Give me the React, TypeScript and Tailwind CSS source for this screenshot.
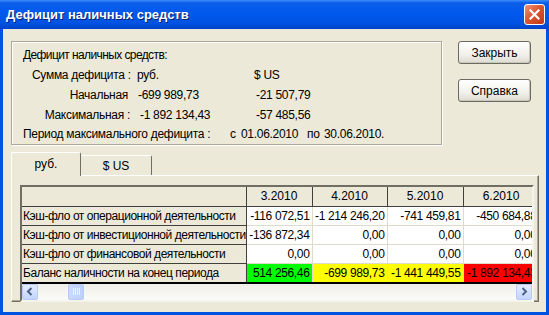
const rows = [
  { label: "Кэш-фло от операционной деятельности", vals: ["-116 072,51", "-1 214 246,20", "-741 459,81", "-450 684,88"] },
  { label: "Кэш-фло от инвестиционной деятельности", vals: ["-136 872,34", "0,00", "0,00", "0,00"] },
  { label: "Кэш-фло от финансовой деятельности", vals: ["0,00", "0,00", "0,00", "0,00"] },
];

const balance = [
  { v: "514 256,46", c: "bg-[#00ff00]" },
  { v: "-699 989,73", c: "bg-[#ffff00]" },
  { v: "-1 441 449,55", c: "bg-[#ffff00]" },
  { v: "-1 892 134,43", c: "bg-[#ff0000]" },
];

const months = ["3.2010", "4.2010", "5.2010", "6.2010"];
const colW = ["w-[66px]", "w-[75px]", "w-[76px]", "w-[76px]"];

function XpButton({ children }: { children: string }) {
  return (
    <button className="w-[73px] h-[23px] rounded-[3px] border border-[#6b6a62] bg-[linear-gradient(to_bottom,#ffffff,#f1f0ea_60%,#dcdad0)] shadow-[inset_-1px_-1px_0_#c9c7ba] text-[12px] text-black">
      {children}
    </button>
  );
}

function ScrollArrow({ dir }: { dir: "left" | "right" }) {
  return (
    <div className="w-[16px] h-[16px] rounded-[2px] border border-[#b7cbf5] bg-[linear-gradient(to_bottom,#e3ecff,#c3d5fd)] flex items-center justify-center">
      <svg width="8" height="9" viewBox="0 0 8 9">
        {dir === "left" ? (
          <path d="M5.5 1 L2 4.5 L5.5 8" stroke="#4d6185" strokeWidth="2" fill="none" />
        ) : (
          <path d="M2.5 1 L6 4.5 L2.5 8" stroke="#4d6185" strokeWidth="2" fill="none" />
        )}
      </svg>
    </div>
  );
}

export default function App() {
  return (
    <div className="w-[549px] h-[315px] flex flex-col font-['Liberation_Sans',Arial,sans-serif] text-[12px] text-black overflow-hidden">
      {/* Title bar */}
      <div className="h-[29px] shrink-0 flex items-center justify-between pl-[6px] pr-[4px] bg-[linear-gradient(to_bottom,#3d8ef9_0%,#0a5de9_10%,#0058ee_45%,#0053e2_80%,#0042c8_100%)]">
        <span className="text-white font-bold text-[13px] [text-shadow:1px_1px_0_#0a1f6e]">Дефицит наличных средств</span>
        <div className="w-[21px] h-[21px] rounded-[3px] border border-white bg-[linear-gradient(to_bottom_right,#f09478,#d9532e_50%,#c0391a)] flex items-center justify-center">
          <svg width="11" height="11" viewBox="0 0 11 11">
            <path d="M1.5 1.5 L9.5 9.5 M9.5 1.5 L1.5 9.5" stroke="white" strokeWidth="2.2" strokeLinecap="square" />
          </svg>
        </div>
      </div>

      {/* Body */}
      <div className="flex-1 bg-[#ece9d8] border-x-[3px] border-b-[3px] border-[#0052e0] flex flex-col pl-[8px] pr-[7px] pt-[12px]">
        <div className="flex">
          {/* Group box */}
          <div className="w-[431px] h-[104px] border border-[#aca899] shadow-[inset_1px_1px_0_#fff,1px_1px_0_#fff] pl-[11px] pt-[4px] tracking-[-0.3px]">
            <div className="h-[19px] leading-[19px] tracking-[-0.6px]">Дефицит наличных средств:</div>
            <div className="flex h-[19px] leading-[19px] mt-[1px] whitespace-nowrap">
              <span className="ml-[9px] w-[98px] text-right">Сумма дефицита :</span>
              <span className="ml-[7px] w-[117px]">руб.</span>
              <span>$ US</span>
            </div>
            <div className="flex h-[19px] leading-[19px] mt-[1px] whitespace-nowrap">
              <span className="ml-[9px] w-[96px] text-right">Начальная</span>
              <span className="ml-[10px] w-[118px]">-699 989,73</span>
              <span>-21 507,79</span>
            </div>
            <div className="flex h-[19px] leading-[19px] mt-[1px] whitespace-nowrap">
              <span className="ml-[9px] w-[98px] text-right">Максимальная :</span>
              <span className="ml-[10px] w-[116px]">-1 892 134,43</span>
              <span>-57 485,56</span>
            </div>
            <div className="flex h-[19px] leading-[19px] whitespace-nowrap">
              <span className="w-[207px]">Период максимального дефицита :</span>
              <span className="w-[11px]">с</span>
              <span className="w-[66px]">01.06.2010</span>
              <span className="w-[17px]">по</span>
              <span>30.06.2010.</span>
            </div>
          </div>

          <div className="ml-[16px] flex flex-col gap-[15px]">
            <XpButton>Закрыть</XpButton>
            <XpButton>Справка</XpButton>
          </div>
        </div>

        {/* Tabs */}
        <div className="mt-[7px] flex items-end h-[23px]">
          <div className="relative z-10 -mb-px h-[24px] w-[70px] bg-[#ece9d8] border-l border-t border-white border-r border-r-[#716f64] rounded-t-[2px] flex items-center justify-center pb-[2px]">
            руб.
          </div>
          <div className="h-[20px] w-[71px] bg-[#ece9d8] border-t border-white border-r border-r-[#716f64] rounded-tr-[2px] flex items-center justify-center">
            $ US
          </div>
        </div>

        {/* Tab panel */}
        <div className="w-[528px] h-[127px] border-l border-t border-white border-r border-r-[#716f64] border-b border-b-[#716f64] shadow-[inset_-1px_-1px_0_#aca899] pl-[8px] pt-[9px]">
          <div className="w-[514px] border-l-2 border-t-2 border-l-[#716f64] border-t-[#716f64] border-r-2 border-b-2 border-r-[#f4f3ee] border-b-[#f4f3ee]">
            <div className="overflow-hidden w-[510px]">
              <table className="table-fixed border-collapse text-[12px] leading-[18px] w-[517px]">
                <colgroup>
                  <col className="w-[224px]" />
                  {colW.map((w, i) => (
                    <col key={i} className={w} />
                  ))}
                </colgroup>
                <tbody>
                  <tr className="h-[19px]">
                    <td className="bg-[#ece9d8] border-r border-b border-[#404040]" />
                    {months.map((m) => (
                      <td key={m} className="bg-[#ece9d8] border-r border-b border-[#404040] text-center whitespace-nowrap">
                        {m}
                      </td>
                    ))}
                  </tr>
                  {rows.map((r) => (
                    <tr key={r.label} className="h-[19px]">
                      <td className="bg-[#ece9d8] border-r border-b border-[#404040] pl-[1px] whitespace-nowrap overflow-hidden tracking-[-0.45px]">
                        {r.label}
                      </td>
                      {r.vals.map((v, i) => (
                        <td key={i} className="bg-white border-r border-b border-[#dedbcb] text-right pr-[2px] whitespace-nowrap overflow-hidden tracking-[-0.35px]">
                          {v}
                        </td>
                      ))}
                    </tr>
                  ))}
                  <tr className="h-[19px]">
                    <td className="bg-[#ece9d8] border-r border-b-2 border-r-[#404040] border-b-black pl-[1px] whitespace-nowrap tracking-[-0.45px]">
                      Баланс наличности на конец периода
                    </td>
                    {balance.map((b, i) => (
                      <td key={i} className={`${b.c} border-r border-r-[#dedbcb] border-b-2 border-b-black text-right pr-[2px] whitespace-nowrap overflow-hidden tracking-[-0.35px]`}>
                        {b.v}
                      </td>
                    ))}
                  </tr>
                </tbody>
              </table>
            </div>
            {/* Horizontal scrollbar */}
            <div className="h-[16px] flex items-center bg-[linear-gradient(to_bottom,#efeee7,#fbfbf8)]">
              <ScrollArrow dir="left" />
              <div className="ml-[30px] w-[16px] h-[16px] rounded-[2px] border border-[#b7cbf5] bg-[linear-gradient(to_right,#cbdafc,#bcd0fb)] flex items-center justify-center gap-[1px]">
                <span className="w-px h-[7px] bg-[#eef3ff]" />
                <span className="w-px h-[7px] bg-[#eef3ff]" />
                <span className="w-px h-[7px] bg-[#eef3ff]" />
                <span className="w-px h-[7px] bg-[#eef3ff]" />
              </div>
              <div className="flex-1" />
              <ScrollArrow dir="right" />
            </div>
          </div>
        </div>
      </div>
    </div>
  );
}
